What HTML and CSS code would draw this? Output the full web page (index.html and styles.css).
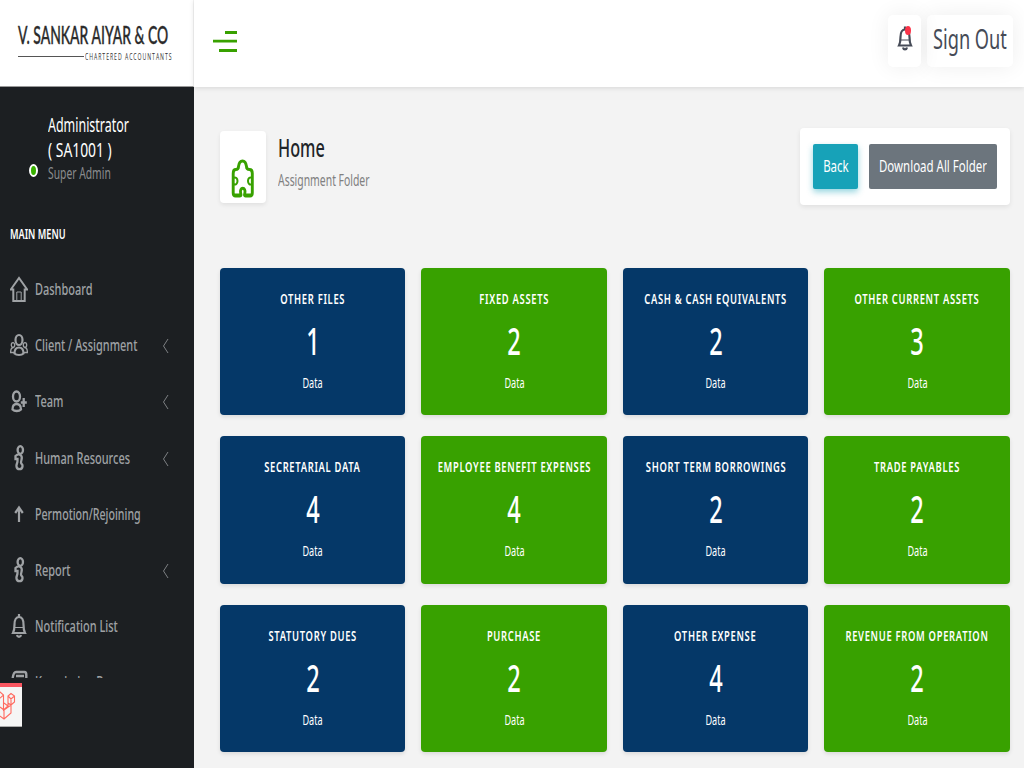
FILE: index.html
```html
<!DOCTYPE html>
<html lang="en">
<head>
<meta charset="utf-8">
<title>Assignment Folder</title>
<link rel="stylesheet" href="styles.css">
</head>
<body>
<svg class="defs" width="0" height="0">
  <symbol id="person" viewBox="0 0 18 28"><g fill="none" stroke="currentColor" stroke-width="2.300"><ellipse cx="10.300" cy="6" rx="2.700" ry="3.800"/><path d="M5.500 12C7 10.500 9 9.500 11 11.500C13 13.500 11 16 11 18.500C11 20.500 13 20 12.500 22.500C12 26 7 26 6.500 22.500C6 20.500 7.500 19.500 7.500 17V15H5.500z"/></g></symbol>
  <symbol id="bell" viewBox="0 0 18 26"><g fill="none" stroke="currentColor" stroke-width="2.200"><path d="M9 1v3M3 20c1.500-3 1.500-5 1.500-8.500C4.500 6.500 6.500 4 9 4s4.500 2.500 4.500 7.500c0 3.500 0 5.500 1.500 8.500zM7 22c.5 2.500 3.500 2.500 4 0"/><path d="M5 14.500h8" stroke-width="1"/></g></symbol>
  <symbol id="left" viewBox="0 0 8 16"><path d="M6 1 1.500 8 6 15" fill="none" stroke="currentColor"/></symbol>
</svg>
<div class="app">
  <aside class="sidebar">
    <div class="brand">
      <span class="t brand-name">V. SANKAR AIYAR &amp; CO</span>
      <div class="brand-sub"><i class="rule"></i><span class="t brand-tag">CHARTERED ACCOUNTANTS</span></div>
    </div>
    <div class="profile">
      <i class="status"></i>
      <div class="who">
        <span class="t name">Administrator</span>
        <span class="t name code">( SA1001 )</span>
        <span class="t role">Super Admin</span>
      </div>
    </div>
    <div class="menu-title"><span class="t">MAIN MENU</span></div>
    <nav class="menu">
      <a class="item"><svg class="ico" viewBox="0 0 18 28"><g fill="none" stroke="currentColor" stroke-width="2"><path d="M.8 14.500 9 3l8.200 11.500H14.700V26H3.300V14.500z"/><path d="M6.800 26v-9h4.400v9" stroke-width="1"/></g></svg><span class="t">Dashboard</span></a>
      <a class="item"><svg class="ico" viewBox="0 0 18 28"><g fill="none" stroke="currentColor" stroke-width="2.200"><ellipse cx="9" cy="9" rx="3.500" ry="5"/><path d="M4.500 22.500c0-4 2-6 4.500-6s4.500 2 4.500 6c-2 2-7 2-9 0z"/><g stroke-width="1.300"><ellipse cx="3" cy="14" rx="1.700" ry="2.400"/><ellipse cx="15" cy="14" rx="1.700" ry="2.400"/><path d="M4 21.500H.6c0-3 .8-5 3-5M14 21.500h3.400c0-3-.8-5-3-5"/></g></g></svg><span class="t">Client / Assignment</span><svg class="chev"><use href="#left"/></svg></a>
      <a class="item"><svg class="ico" viewBox="0 0 18 28"><g fill="none" stroke="currentColor" stroke-width="2.300"><ellipse cx="6.500" cy="9.500" rx="3.500" ry="5"/><path d="M2.500 22.500c0-4 1.500-5.500 4-5.500s4.500 1.500 4.500 5.500c-2 2-6.500 2-8.500 0zM13.700 11v9M10.800 15.500h6"/></g></svg><span class="t">Team</span><svg class="chev"><use href="#left"/></svg></a>
      <a class="item"><svg class="ico"><use href="#person"/></svg><span class="t">Human Resources</span><svg class="chev"><use href="#left"/></svg></a>
      <a class="item"><svg class="ico" viewBox="0 0 18 28"><path d="M9 22V7.500M5.200 13 9 7.500l3.800 5.500" fill="none" stroke="currentColor" stroke-width="2.200"/></svg><span class="t promo">Permotion/Rejoining</span></a>
      <a class="item"><svg class="ico"><use href="#person"/></svg><span class="t">Report</span><svg class="chev"><use href="#left"/></svg></a>
      <a class="item"><svg class="ico"><use href="#bell"/></svg><span class="t">Notification List</span></a>
      <a class="item"><svg class="ico" viewBox="0 0 18 28"><path d="M2.500 12C3 6 4 4 6 4h8.500c1.500 0 1.800 1 1.800 3v17H4c-1.500 0-2-2-2-4zM6 8h8" fill="none" stroke="currentColor" stroke-width="2.400"/></svg><span class="t">Knowledge Base</span></a>
    </nav>
  </aside>
  <div class="page">
    <header class="topbar">
      <svg class="burger" width="24" height="24" viewBox="0 0 24 24"><path d="M12 2.500h12M0 11.200h24M6 20.500h18" stroke="#38a100" stroke-width="2.800"/></svg>
      <div class="actions">
        <div class="notify"><svg class="bell"><use href="#bell"/></svg><i class="dot"></i></div>
        <div class="signout"><span class="t">Sign Out</span></div>
      </div>
    </header>
    <main class="content">
      <section class="heading">
        <div class="badge"><svg width="24" height="42" viewBox="0 0 24 42"><g fill="none" stroke="#38a100"><path d="M2.200 35V15.500Q2.200 11.500 4.800 11.500Q7.500 11.500 7.500 8.500C8.500 1.200 14.500 1.200 15.500 8.500Q15.500 11.500 18.500 11.500Q21.300 11.500 21.300 15.500V35Q21.300 38 19 38H14.500Q13 38 13.800 35.500C15.500 28.500 8 28.500 9.700 35.500Q10.500 38 9 38H4.500Q2.200 38 2.200 35z" stroke-width="2.900"/><path d="M2 20C8 17 8 29 2 26M21.500 20C15.500 17 15.500 29 21.500 26" stroke-width="2"/><path d="M3 37.300h6.500M14 37.300h6.500" stroke-width="3.500"/></g></svg></div>
        <div class="titles"><span class="t h1">Home</span><span class="t sub">Assignment Folder</span></div>
        <div class="tools"><a class="btn back"><span class="t">Back</span></a><a class="btn dl"><span class="t">Download All Folder</span></a></div>
      </section>
      <section class="grid">
        <div class="card"><b class="t">OTHER FILES</b><span class="t num">1</span><span class="t data">Data</span></div>
        <div class="card green"><b class="t">FIXED ASSETS</b><span class="t num">2</span><span class="t data">Data</span></div>
        <div class="card"><b class="t">CASH &amp; CASH EQUIVALENTS</b><span class="t num">2</span><span class="t data">Data</span></div>
        <div class="card green"><b class="t">OTHER CURRENT ASSETS</b><span class="t num">3</span><span class="t data">Data</span></div>
        <div class="card"><b class="t">SECRETARIAL DATA</b><span class="t num">4</span><span class="t data">Data</span></div>
        <div class="card green"><b class="t">EMPLOYEE BENEFIT EXPENSES</b><span class="t num">4</span><span class="t data">Data</span></div>
        <div class="card"><b class="t">SHORT TERM BORROWINGS</b><span class="t num">2</span><span class="t data">Data</span></div>
        <div class="card green"><b class="t">TRADE PAYABLES</b><span class="t num">2</span><span class="t data">Data</span></div>
        <div class="card"><b class="t">STATUTORY DUES</b><span class="t num">2</span><span class="t data">Data</span></div>
        <div class="card green"><b class="t">PURCHASE</b><span class="t num">2</span><span class="t data">Data</span></div>
        <div class="card"><b class="t">OTHER EXPENSE</b><span class="t num">4</span><span class="t data">Data</span></div>
        <div class="card green"><b class="t">REVENUE FROM OPERATION</b><span class="t num">2</span><span class="t data">Data</span></div>
      </section>
    </main>
  </div>
</div>
<div class="debug-tab"><svg width="22" height="36" viewBox="0 0 22 36"><path d="M-5 8 0 5 3.500 8V23L8 19V9L11 6.500 14.500 9V15L11 18 8 16M8 9 11 12 14.500 9M11 12V26L4 32-3 27M-1 12 3.500 8M4 23v9M4 23 11 18M4 23l-4-3M8 19 4 16" fill="none" stroke="#ff6a60" stroke-width="1.100"/></svg></div>
</body>
</html>
```

FILE: styles.css
```css
* { box-sizing: border-box; }
body { margin: 0; font-family: "Noto Sans", "Open Sans", sans-serif; background: #f3f3f3; overflow: hidden; }
.defs { display: block; }
.app { display: flex; height: 768px; width: 1024px; }
/* condensed text */
.t { display: block; white-space: nowrap; transform: scaleX(.65); transform-origin: left center; flex: none; width: max-content; }

.sidebar { width: 194px; flex: none; background: #1c1f22; overflow: hidden; }
.brand { height: 87px; background: #fff; border-right: 1px solid #f3f3f3; border-bottom: 1px solid #999; padding: 17px 0 0 18px; overflow: hidden; }
.brand-name { font: 500 25px/34px Lato, sans-serif; color: #2b2b2b; transform: scaleX(.557); -webkit-text-stroke: .4px #2b2b2b; }
.brand-sub { display: flex; align-items: center; height: 11px; }
.rule { width: 66px; height: 1px; background: #555; margin-right: 1px; flex: none; }
.brand-tag { font: 500 8.500px/10px "Open Sans", sans-serif; letter-spacing: 1.600px; color: #333; transform: scaleX(.605); }
.profile { display: flex; height: 122px; padding: 26px 0 0 29px; }
.status { width: 9px; height: 13px; border-radius: 50%; background: #38b000; border: 2px solid #fff; margin-top: 51px; }
.who { margin-left: 10px; }
.name { font-size: 19px; line-height: 25px; color: #fff; transform: scaleX(.655); }
.code { transform: scaleX(.73); }
.role { font-size: 16px; line-height: 20px; color: #8a8c8e; transform: scaleX(.645); }
.menu-title { height: 52px; padding: 15px 0 0 10px; font-size: 13.500px; line-height: 20px; font-weight: 600; color: #fff; }
.menu-title .t { transform: scaleX(.68); }
.menu { height: 417px; overflow: hidden; }
.item { display: flex; align-items: center; height: 56.200px; padding-left: 10px; font-size: 17px; font-weight: 500; color: #9fa2a5; position: relative; }
.item .t { margin-top: -1px; transform: scaleX(.645); }
.item .promo { transform: scaleX(.625); }
.ico { width: 18px; height: 28px; margin-right: 7px; flex: none; }
.chev { position: absolute; left: 162px; top: 21px; width: 8px; height: 16px; color: #7d8083; }

.page { flex: 1; min-width: 0; }
.topbar { height: 87px; background: #fff; display: flex; justify-content: space-between; padding: 15px 11px 0 19px; box-shadow: 0 1px 5px rgba(0,0,0,.12); }
.burger { margin-top: 15px; }
.actions { display: flex; gap: 6px; }
.notify, .signout { height: 52px; background: #fff; border-radius: 5px; box-shadow: 0 0 22px rgba(0,0,0,.07); }
.notify { width: 33px; padding: 10px 0 0 8px; position: relative; }
.bell { width: 18px; height: 27px; color: #464b57; }
.dot { position: absolute; left: 17px; top: 11px; width: 6px; height: 9px; border-radius: 50%; background: #fb3449; }
.signout { width: 86px; padding: 2px 0 0 6px; font-size: 28px; line-height: 42px; color: #464b57; }

.content { padding: 41px 14px 0 26px; }
.heading { display: flex; height: 139.700px; }
.badge { width: 46px; height: 72px; margin-top: 3px; background: #fff; border-radius: 4px; box-shadow: 0 2px 4px rgba(0,0,0,.08); padding: 27px 0 0 11px; }
.titles { padding: 3px 0 0 12px; }
.h1 { font-size: 25px; line-height: 32px; font-weight: 500; color: #212529; }
.sub { font-size: 16px; line-height: 20px; color: #808080; margin-top: 7px; }
.tools { display: flex; gap: 11px; margin-left: auto; width: 210px; height: 77px; background: #fff; border-radius: 4px; box-shadow: 0 2px 5px rgba(0,0,0,.08); padding: 16px 13px; }
.btn { display: flex; flex: none; justify-content: center; align-items: center; height: 45px; border-radius: 2px; color: #fff; font-size: 17px; padding-bottom: 2px; }
.btn .t, .card .t { transform-origin: center; }
.btn .t { transform: scaleX(.675); }
.back { width: 45px; background: #17a2b8; box-shadow: 0 3px 6px rgba(23,162,184,.45); }
.dl { width: 128px; background: #6c757d; }
.grid { display: grid; grid-template-columns: repeat(4, 185.300px); column-gap: 16.200px; row-gap: 21px; }
.card { height: 147.500px; background: #053868; border-radius: 4px; color: #fff; display: flex; flex-direction: column; align-items: center; padding-top: 21px; box-shadow: 0 2px 4px rgba(0,0,0,.1); }
.green { background: #38a100; }
.card b { font-size: 13.500px; line-height: 20px; font-weight: 600; letter-spacing: 1px; transform: scaleX(.695); }
.num { font-size: 38px; line-height: 50px; margin-top: 6px; font-weight: 500; }
.card .num { transform: scaleX(.62); }
.data { font-size: 14px; line-height: 20px; margin-top: 8px; }
.debug-tab { position: absolute; left: 0; top: 683px; width: 22px; height: 44px; background: #f5f5f5; border-top: 4px solid #fa5661; border-bottom: 1px solid #aaa; overflow: hidden; }
```
